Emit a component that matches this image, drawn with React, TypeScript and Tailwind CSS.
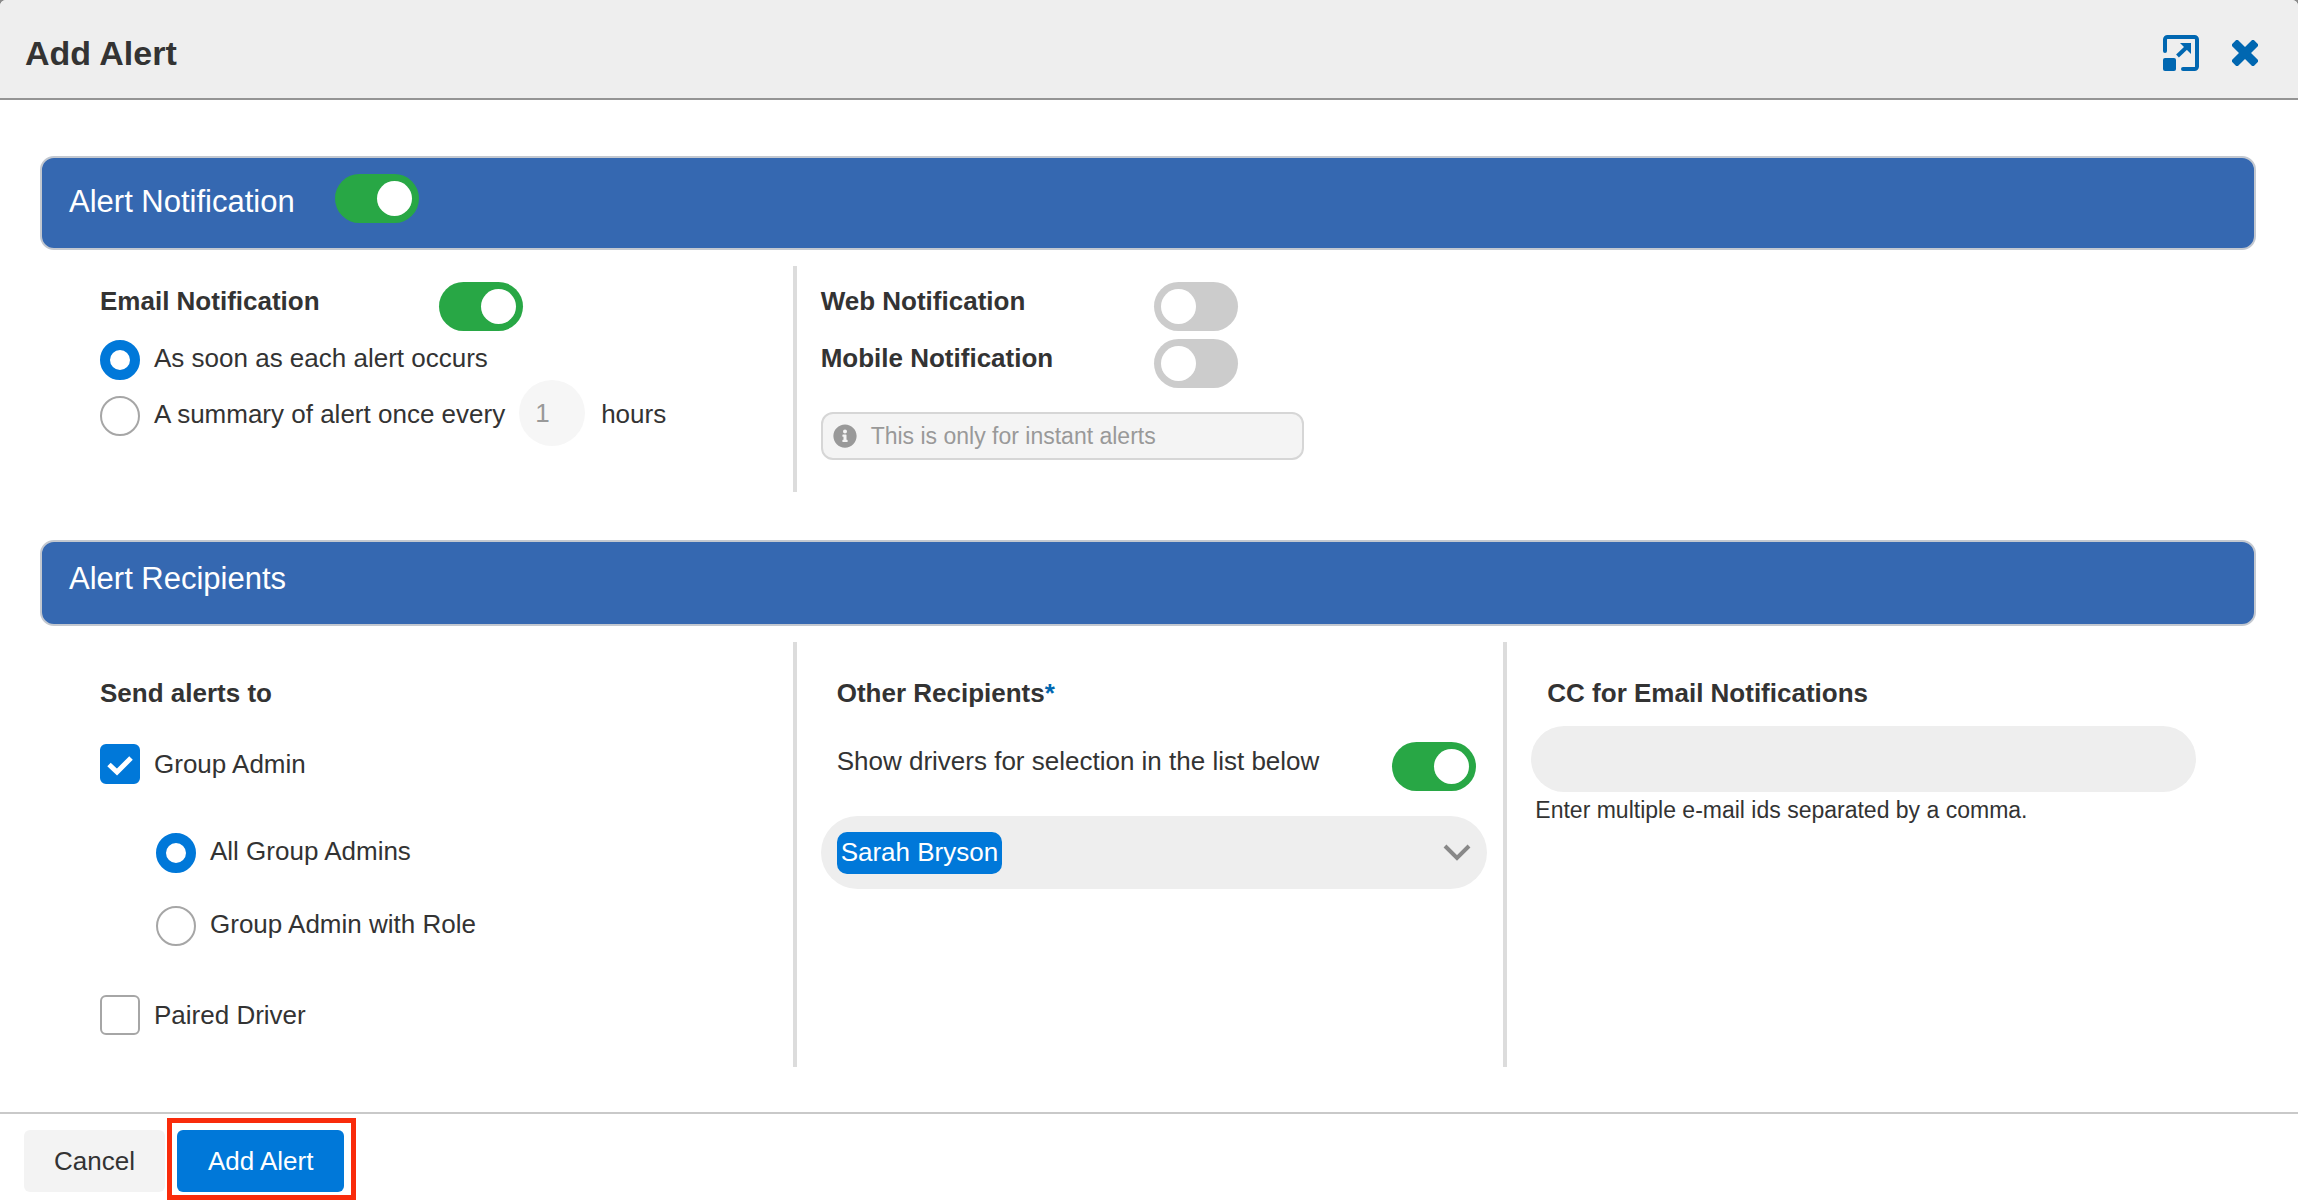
import { twMerge } from 'tailwind-merge'
import type { ComponentProps, ReactNode } from 'react'
import { FaInfoCircle } from 'react-icons/fa'

function Toggle({ className, ...props }: ComponentProps<'input'>) {
  return (
    <input
      type="checkbox"
      role="switch"
      className={twMerge(
        "h-[49px] w-[84px] shrink-0 cursor-pointer appearance-none rounded-full bg-[#ccc] p-[7px] before:block before:size-[35px] before:rounded-full before:bg-white before:content-[''] checked:bg-[#28a745] checked:before:ml-auto",
        className
      )}
      {...props}
    />
  )
}

function Radio({ children, ...props }: ComponentProps<'input'>) {
  return (
    <label className="flex cursor-pointer items-start gap-[14px] leading-[36px]">
      <input
        type="radio"
        className="size-10 shrink-0 cursor-pointer appearance-none rounded-full border-2 border-[#a6a6a6] bg-white checked:border-[10px] checked:border-[#0078d9]"
        {...props}
      />
      {children}
    </label>
  )
}

function Checkbox({ children, ...props }: ComponentProps<'input'>) {
  return (
    <label className="relative flex cursor-pointer items-start gap-[14px] leading-10">
      <input
        type="checkbox"
        className="peer size-10 shrink-0 cursor-pointer appearance-none rounded-md border-2 border-[#a6a6a6] bg-white checked:border-[#0078d9] checked:bg-[#0078d9]"
        {...props}
      />
      <svg
        viewBox="0 0 40 40"
        aria-hidden="true"
        className="pointer-events-none absolute top-0 left-0 hidden size-10 fill-none stroke-white stroke-5 peer-checked:block"
      >
        <path d="M9 20.5l8 7.5L31 14" />
      </svg>
      {children}
    </label>
  )
}

function SectionBar({ children }: { children: ReactNode }) {
  return (
    <div className="flex items-start rounded-[14px] border-2 border-[#c3c8d0] bg-[#3568b1] px-[27px] pt-4 pb-[18px] text-[31px] text-white">
      {children}
    </div>
  )
}

export default function App() {
  return (
    <div className="bg-[#8a8a8a]">
      <div
        role="dialog"
        aria-labelledby="dialog-title"
        className="rounded-t-md bg-white font-['Liberation_Sans',Arial,sans-serif] text-[26px] text-[#333]"
      >
        <header className="flex h-[100px] items-center justify-between rounded-t-md border-b-2 border-[#949494] bg-[#eee] pt-2 pr-10 pl-[25px]">
          <h1 id="dialog-title" className="text-[34px] leading-[50px] font-bold">
            Add Alert
          </h1>
          <div className="flex items-center gap-[33px]">
            <button type="button" aria-label="Expand">
              <svg viewBox="0 0 36 36" className="size-9 fill-none stroke-[#0067b1]">
                <path
                  d="M2 16V4.5a2.500 2.500 0 0 1 2.500-2.500h27a2.500 2.500 0 0 1 2.500 2.500v27a2.500 2.500 0 0 1-2.500 2.500H20"
                  strokeWidth="4"
                  strokeLinecap="round"
                />
                <rect x="0" y="23" width="13" height="13" rx="2" className="fill-[#0067b1]" stroke="none" />
                <path d="M14.500 21L25 11" strokeWidth="4" />
                <path d="M17 8h11v11z" className="fill-[#0067b1]" stroke="none" />
              </svg>
            </button>
            <button type="button" aria-label="Close">
              <svg viewBox="0 0 26 26" className="size-[26px] fill-[#0067b1]">
                <rect x="-2.5" y="8.75" width="31" height="8.5" rx="2" transform="rotate(45 13 13)" />
                <rect x="-2.5" y="8.75" width="31" height="8.5" rx="2" transform="rotate(-45 13 13)" />
              </svg>
            </button>
          </div>
        </header>

        <main className="pt-14 pr-[42px] pb-[45px] pl-10">
          <section>
            <SectionBar>
              <label htmlFor="alert-notification" className="w-[266px] leading-[56px]">
                Alert Notification
              </label>
              <Toggle id="alert-notification" defaultChecked />
            </SectionBar>

            <div className="mt-4 grid grid-cols-3 px-[42px]">
              <div className="px-[18px] pt-4 pb-[46px]">
                <div className="flex items-start">
                  <label htmlFor="email-notification" className="w-[339px] leading-[38px] font-bold">
                    Email Notification
                  </label>
                  <Toggle id="email-notification" defaultChecked />
                </div>
                <div className="mt-[9px]">
                  <Radio name="frequency" defaultChecked>
                    As soon as each alert occurs
                  </Radio>
                </div>
                <div className="flex items-start">
                  <div className="pt-4">
                    <Radio name="frequency">A summary of alert once every</Radio>
                  </div>
                  <input
                    type="text"
                    aria-label="Hours between summaries"
                    defaultValue="1"
                    disabled
                    className="ml-[14px] size-[66px] rounded-full bg-[#f6f6f6] px-4 text-[#999]"
                  />
                  <span className="ml-4 pt-4 leading-[36px]">hours</span>
                </div>
              </div>

              <div className="col-span-2 border-l-4 border-[#dcdcdc] px-6 pt-4">
                <div className="flex w-[666px] flex-col gap-2">
                  <div className="flex items-start">
                    <label htmlFor="web-notification" className="w-1/2 leading-[38px] font-bold">
                      Web Notification
                    </label>
                    <Toggle id="web-notification" />
                  </div>
                  <div className="flex items-start">
                    <label htmlFor="mobile-notification" className="w-1/2 leading-[38px] font-bold">
                      Mobile Notification
                    </label>
                    <Toggle id="mobile-notification" />
                  </div>
                </div>
                <p className="mt-6 flex h-12 w-[483px] items-center gap-[14px] rounded-xl border-2 border-[#d6d6d6] bg-[#f4f4f4] px-[10px] text-[23px] text-[#999]">
                  <FaInfoCircle className="size-6" />
                  This is only for instant alerts
                </p>
              </div>
            </div>
          </section>

          <section className="mt-12">
            <SectionBar>
              <h2 className="mb-[7px] leading-[41px]">Alert Recipients</h2>
            </SectionBar>

            <div className="mt-4 grid grid-cols-3 px-[42px]">
              <div className="px-[18px] py-8">
                <h3 className="leading-[38px] font-bold">Send alerts to</h3>
                <div className="mt-8">
                  <Checkbox defaultChecked>Group Admin</Checkbox>
                </div>
                <div className="my-[49px] flex flex-col gap-[33px] pl-14">
                  <Radio name="group-admins" defaultChecked>
                    All Group Admins
                  </Radio>
                  <Radio name="group-admins">Group Admin with Role</Radio>
                </div>
                <Checkbox>Paired Driver</Checkbox>
              </div>

              <div className="border-l-4 border-[#dcdcdc] py-8 pr-4 pl-6">
                <h3 className="pl-4 leading-[38px] font-bold">
                  Other Recipients<span className="text-[#0067b1]">*</span>
                </h3>
                <div className="mt-[30px] flex items-start justify-between pr-[11px] pl-4">
                  <label htmlFor="show-drivers" className="leading-[38px]">
                    Show drivers for selection in the list below
                  </label>
                  <Toggle id="show-drivers" defaultChecked />
                </div>
                <label className="mt-[25px] flex h-[73px] items-center justify-between rounded-full bg-[#eee] px-4">
                  <select
                    aria-label="Other recipients"
                    className="h-[42px] appearance-none rounded-[10px] bg-[#0078d9] px-1 text-white [field-sizing:content]"
                  >
                    <option>Sarah Bryson</option>
                  </select>
                  <svg viewBox="0 0 28 18" aria-hidden="true" className="h-[18px] w-7 fill-none stroke-[#888] stroke-4">
                    <path d="M2 2l12 12L26 2" />
                  </svg>
                </label>
              </div>

              <div className="border-l-4 border-[#dcdcdc] py-8 pr-[18px] pl-6">
                <label htmlFor="cc-emails" className="block pl-4 leading-[38px] font-bold">
                  CC for Email Notifications
                </label>
                <input
                  id="cc-emails"
                  type="text"
                  aria-describedby="cc-hint"
                  className="mt-[14px] block h-[66px] w-full rounded-full bg-[#eee] px-6"
                />
                <p id="cc-hint" className="mt-1 pl-1 text-[23px] leading-7">
                  Enter multiple e-mail ids separated by a comma.
                </p>
              </div>
            </div>
          </section>
        </main>

        <footer className="flex gap-3 border-t-2 border-[#c9c9c9] px-6 pt-4 pb-[10px]">
          <button type="button" className="h-[62px] rounded-md bg-[#f3f3f3] px-[30px]">
            Cancel
          </button>
          <div className="relative">
            <button type="button" className="h-[62px] rounded-md bg-[#0078d9] px-[31px] text-white">
              Add Alert
            </button>
            <span className="pointer-events-none absolute -top-3 -right-3 -bottom-2 -left-[10px] border-[5px] border-[#f92b0b]" />
          </div>
        </footer>
      </div>
    </div>
  )
}
